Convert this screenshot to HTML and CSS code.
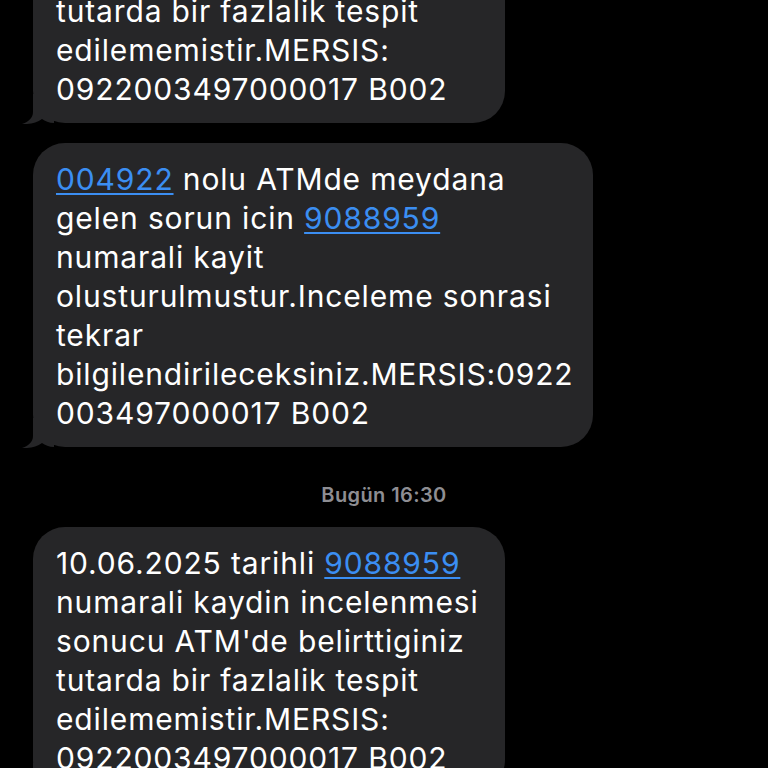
FILE: index.html
```html
<!DOCTYPE html>
<html lang="tr">
<head>
<meta charset="utf-8">
<link rel="stylesheet" href="styles.css">
</head>
<body>
<div class="thread">
  <div class="bubble narrow">
    <p class="msg"><span class="line">10.06.2025 tarihli <a class="link">9088959</a></span><span class="line">numarali kaydin incelenmesi</span><span class="line">sonucu ATM'de belirttiginiz</span><span class="line">tutarda bir fazlalik tespit</span><span class="line">edilememistir.MERSIS:</span><span class="line">0922003497000017 B002</span></p>
    <svg class="tail" viewBox="0 0 32 30" width="32" height="30"><path d="M11 0 L11 18 C11 24 6 28 0 30 C8 30.5 15 28.5 20 25 C23 27 27 29 32 29 L32 0 Z"/></svg>
  </div>
  <div class="bubble wide">
    <p class="msg"><span class="line"><a class="link">004922</a> nolu ATMde meydana</span><span class="line">gelen sorun icin <a class="link">9088959</a></span><span class="line">numarali kayit</span><span class="line">olusturulmustur.Inceleme sonrasi</span><span class="line">tekrar</span><span class="line">bilgilendirileceksiniz.MERSIS:0922</span><span class="line">003497000017 B002</span></p>
    <svg class="tail" viewBox="0 0 32 30" width="32" height="30"><path d="M11 0 L11 18 C11 24 6 28 0 30 C8 30.5 15 28.5 20 25 C23 27 27 29 32 29 L32 0 Z"/></svg>
  </div>
  <div class="stamp"><span class="day">Bugün</span> 16:30</div>
  <div class="bubble narrow">
    <p class="msg"><span class="line">10.06.2025 tarihli <a class="link">9088959</a></span><span class="line">numarali kaydin incelenmesi</span><span class="line">sonucu ATM'de belirttiginiz</span><span class="line">tutarda bir fazlalik tespit</span><span class="line">edilememistir.MERSIS:</span><span class="line">0922003497000017 B002</span></p>
    <svg class="tail" viewBox="0 0 32 30" width="32" height="30"><path d="M11 0 L11 18 C11 24 6 28 0 30 C8 30.5 15 28.5 20 25 C23 27 27 29 32 29 L32 0 Z"/></svg>
  </div>
</div>
</body>
</html>
```
FILE: styles.css
```css
html, body {
  margin: 0;
  padding: 0;
  background: #000;
  height: 100%;
  overflow: hidden;
}
.thread {
  display: flex;
  flex-direction: column;
  align-items: flex-start;
  padding-left: 33px;
  margin-top: -142px;
  font-family: Inter, "Liberation Sans", Arial, sans-serif;
}
.bubble {
  position: relative;
  box-sizing: border-box;
  background: #262628;
  border-radius: 32px;
  padding: 17px 0 14px 23px;
  color: #fff;
  font-size: 30px;
  line-height: 39px;
  letter-spacing: 0.85px;
}
.bubble + .bubble {
  margin-top: 20px;
}
.narrow { width: 472px; }
.wide { width: 560px; }
.msg {
  margin: 0;
}
.line {
  display: block;
  white-space: nowrap;
}
.link {
  color: #3b8ef2;
  text-decoration: underline;
  text-decoration-thickness: 2px;
  text-underline-offset: 3px;
}
.tail {
  position: absolute;
  left: -11px;
  bottom: -1px;
  fill: #262628;
}
.stamp {
  align-self: stretch;
  margin: 37px 0 21px -33px;
  text-align: center;
  color: #8e8e93;
  font-size: 20px;
  line-height: 22px;
  font-weight: 600;
  letter-spacing: 0.4px;
}
```
